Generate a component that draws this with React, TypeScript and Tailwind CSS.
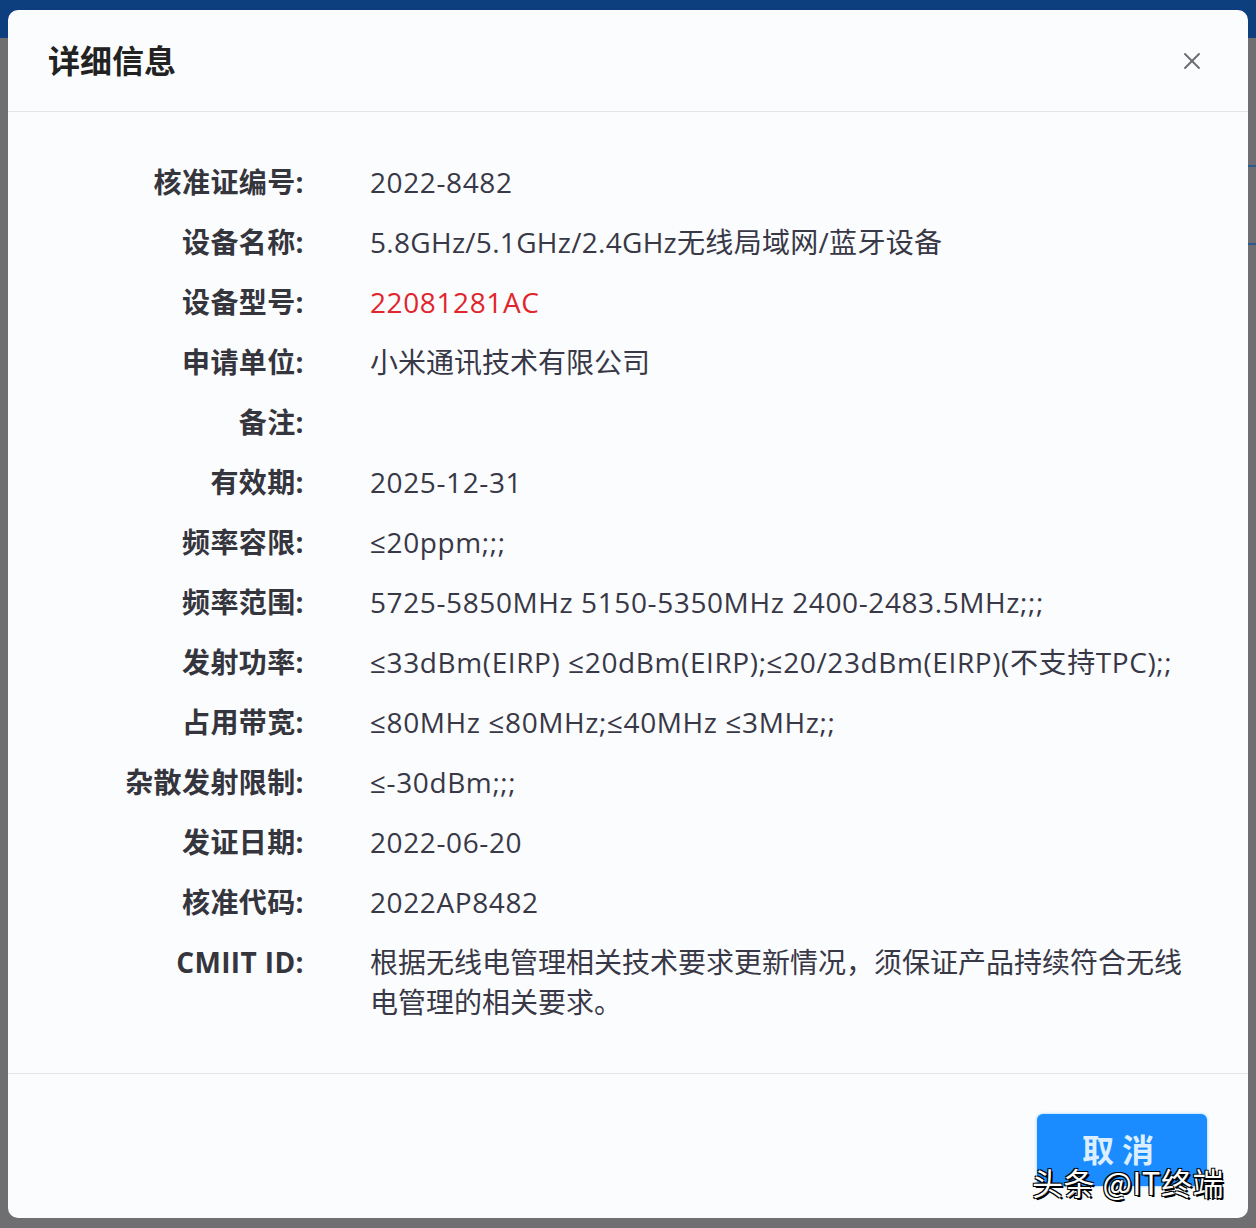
import { X } from 'lucide-react';

// track: letter spacing for rows whose text is mostly Latin (the reference's Latin face runs wider)
const rows: { label: string; value: string; red?: boolean; track?: string }[] = [
  { label: '核准证编号', value: '2022-8482', track: 'tracking-[0.6px]' },
  { label: '设备名称', value: '5.8GHz/5.1GHz/2.4GHz无线局域网/蓝牙设备', track: 'tracking-[0.3px]' },
  { label: '设备型号', value: '22081281AC', red: true, track: 'tracking-[0.6px]' },
  { label: '申请单位', value: '小米通讯技术有限公司' },
  { label: '备注', value: '' },
  { label: '有效期', value: '2025-12-31', track: 'tracking-[0.6px]' },
  { label: '频率容限', value: '≤20ppm;;;', track: 'tracking-[0.6px]' },
  { label: '频率范围', value: '5725-5850MHz 5150-5350MHz 2400-2483.5MHz;;;', track: 'tracking-[0.6px]' },
  { label: '发射功率', value: '≤33dBm(EIRP) ≤20dBm(EIRP);≤20/23dBm(EIRP)(不支持TPC);;', track: 'tracking-[0.6px]' },
  { label: '占用带宽', value: '≤80MHz ≤80MHz;≤40MHz ≤3MHz;;', track: 'tracking-[0.6px]' },
  { label: '杂散发射限制', value: '≤-30dBm;;;', track: 'tracking-[0.6px]' },
  { label: '发证日期', value: '2022-06-20', track: 'tracking-[0.6px]' },
  { label: '核准代码', value: '2022AP8482', track: 'tracking-[0.6px]' },
  { label: 'CMIIT ID', value: '根据无线电管理相关技术要求更新情况，须保证产品持续符合无线电管理的相关要求。' },
];

const font = { fontFamily: '"Open Sans", "Noto Sans CJK SC", sans-serif' };

export default function App() {
  return (
    <div className="relative h-[1228px] w-[1256px] overflow-hidden bg-[#6f6f71]" style={font}>
      {/* page behind the overlay */}
      <div className="absolute left-0 top-0 h-[38px] w-full bg-[#0d3f7e]" />
      <div className="absolute right-0 top-[165px] h-[2px] w-[10px] bg-[#2a5a92]" />
      <div className="absolute right-0 top-[243px] h-[2px] w-[10px] bg-[#2a5a92]" />

      <div className="relative mx-[8px] mt-[10px] flex h-[1208px] flex-col rounded-[10px] bg-[#fbfcfe]">
        <div className="flex h-[102px] items-center justify-between border-b border-[#e3e5ea] pl-[40px] pr-[42px]">
          <h1 className="text-[32px] font-bold text-[#222]">详细信息</h1>
          <X size={28} strokeWidth={1.6} className="text-[#6b6b72]" />
        </div>

        <div className="flex flex-col gap-[20px] pb-[50px] pt-[50px]">
          {rows.map((r) => (
            <div key={r.label} className="flex items-start text-[28px] leading-[40px]">
              <div className="w-[296px] shrink-0 text-right font-bold tracking-[0.4px] text-[#35353d]">
                {r.label}:
              </div>
              <div
                className={
                  'ml-[66px] w-[824px] ' +
                  (r.track ?? '') +
                  ' ' +
                  (r.red ? 'text-[#e0262c]' : 'text-[#383846]')
                }
              >
                {r.value}
              </div>
            </div>
          ))}
        </div>

        <div className="mt-auto flex justify-end border-t border-[#e3e5ea] pb-[32px] pr-[41px] pt-[40px]">
          <button className="flex h-[72px] w-[170px] items-center justify-center rounded-[6px] bg-[#1a8cff] text-[32px] font-bold tracking-[8px] text-[#dcefff] shadow-[0_0_3px_#7cc4ff]">
            取消
          </button>
        </div>
      </div>

      <div
        className="absolute left-[1032px] top-[1162px] text-[31px] leading-[40px] tracking-[0.5px] text-white"
        style={{
          fontFamily: '"Noto Sans CJK SC", sans-serif',
          textShadow: '2px 2px 0 #000, -1px -1px 0 #000, 1px -1px 0 #000, -1px 1px 0 #000',
        }}
      >
        头条 @IT终端
      </div>
    </div>
  );
}
